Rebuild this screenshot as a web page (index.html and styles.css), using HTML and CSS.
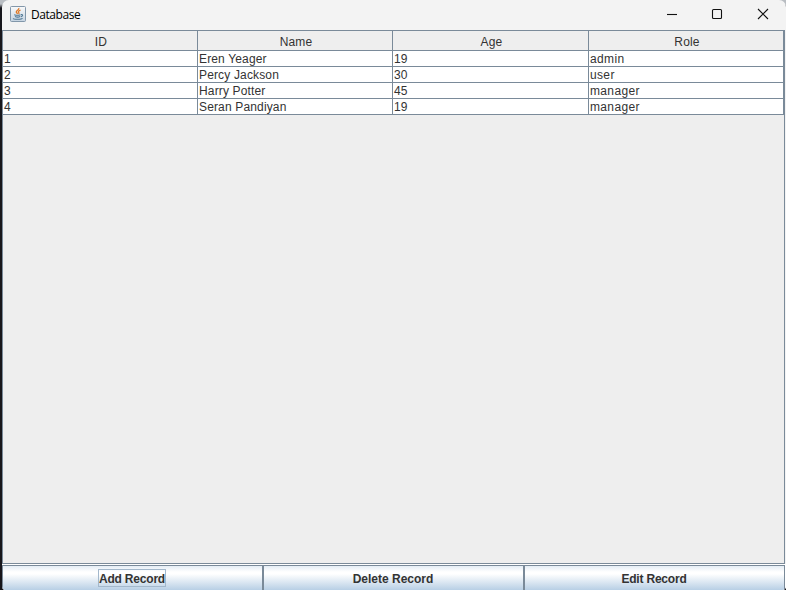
FILE: index.html
```html
<!DOCTYPE html>
<html lang="en">
<head>
<meta charset="utf-8">
<title>Database</title>
<link rel="stylesheet" href="styles.css">
</head>
<body>
<main class="window">
  <header class="titlebar">
    <svg class="app-icon" width="16" height="16" viewBox="0 0 16 16">
      <defs><linearGradient id="tile" x1="0" y1="0" x2="0" y2="1"><stop offset="0" stop-color="#fafafa"/><stop offset="1" stop-color="#c4d3e1"/></linearGradient></defs>
      <rect x=".5" y=".5" width="15" height="15" rx="1" fill="url(#tile)" stroke="#8297aa"/>
      <path d="M8.800 2C9.500 4 5.800 4.300 6.300 6C6.500 7 7.500 7.200 7.300 8M10.500 4C8.500 5 7.800 5.600 8.800 6.600C9.200 7.300 8.900 7.800 8.500 8.100" fill="none" stroke="#e07a28" stroke-width="1.300"/>
      <path d="M4.200 8.700C6 9.300 9 9.300 10.500 8.700M5 10.500C6.500 11.200 9 11.200 10.200 10.500M11 8.600C13.300 8.200 13 10.200 10.900 10.700M3.300 12.300C3.500 13.600 11.700 13.600 12.500 12.300" fill="none" stroke="#4f7794" stroke-width="1.100"/>
    </svg>
    <h1 class="title">Database</h1>
    <div class="controls">
      <svg width="12" height="12" viewBox="0 0 12 12"><path d="M2 6.500H12"/></svg>
      <svg width="12" height="12" viewBox="0 0 12 12"><rect x="1.500" y="1.500" width="9" height="9" rx="1"/></svg>
      <svg width="12" height="12" viewBox="0 0 12 12"><path d="M1 1L11 11M11 1L1 11"/></svg>
    </div>
  </header>
  <section class="pane">
    <div class="grid">
      <div class="head">ID</div><div class="head">Name</div><div class="head">Age</div><div class="head">Role</div>
      <div class="cell">1</div><div class="cell">Eren Yeager</div><div class="cell">19</div><div class="cell role">admin</div>
      <div class="cell">2</div><div class="cell">Percy Jackson</div><div class="cell">30</div><div class="cell role">user</div>
      <div class="cell">3</div><div class="cell">Harry Potter</div><div class="cell">45</div><div class="cell role">manager</div>
      <div class="cell">4</div><div class="cell">Seran Pandiyan</div><div class="cell">19</div><div class="cell role">manager</div>
    </div>
  </section>
  <footer class="actions">
    <button class="action"><span class="label tight focused">Add Record</span></button>
    <button class="action"><span class="label">Delete Record</span></button>
    <button class="action"><span class="label tight">Edit Record</span></button>
  </footer>
</main>
</body>
</html>
```
FILE: styles.css
```css
* { box-sizing: border-box; }
body {
  margin: 0;
  height: 590px;
  padding-left: 2px;
  overflow: hidden;
  background: linear-gradient(#b9bdc2 0, #b9bdc2 4px, #17161b 8px);
  font: 12px/15px "Liberation Sans", Arial, sans-serif;
  color: #333;
}
.window {
  display: flex;
  flex-direction: column;
  height: 590px;
  overflow: hidden;
  border-radius: 7px 7px 4px 4px;
  background: #f3f3f3;
}
.titlebar {
  display: flex;
  align-items: center;
  height: 30px;
  padding: 0 17px 2px 8px;
}
.app-icon { flex: none; }
.title {
  margin: 2px 0 0 5px;
  font: 12px/16px "Open Sans", sans-serif;
  letter-spacing: -0.45px;
  color: #000;
}
.controls {
  display: flex;
  gap: 34px;
  margin-left: auto;
}
.controls svg {
  fill: none;
  stroke: #111;
  stroke-width: 1.1;
}
.pane {
  height: 534px;
  margin-right: 1px;
  border: 1px solid #7a8a99;
  background: #eee;
}
.grid {
  display: grid;
  grid-template-columns: 195px 195px 196px 195px;
  grid-template-rows: 20px repeat(4, 16px);
}
.head, .cell {
  border-right: 1px solid #7a8a99;
  border-bottom: 1px solid #7a8a99;
  letter-spacing: 0.15px;
  white-space: nowrap;
}
.head {
  padding: 4px 0 0 2px;
  line-height: 14px;
  text-align: center;
}
.cell {
  padding: 1px 0 0 1px;
  background: #fff;
  line-height: 15px;
}
.role { letter-spacing: 0.35px; }
.actions {
  display: grid;
  grid-template-columns: 261px 261px 261px;
  flex: 1;
  padding: 1px 1px 0 0;
  background: #fff;
}
.action {
  display: flex;
  align-items: flex-start;
  justify-content: center;
  height: 25px;
  margin: 0;
  padding: 3px 1px 0 0;
  border: 1px solid #7a8a99;
  border-bottom: 0;
  background: linear-gradient(#e4edf5 0, #fff 6px, #fff 8px, #b8cfe5 24px);
  color: #333;
  font: bold 12px/18px "Liberation Sans", Arial, sans-serif;
}
.label {
  height: 18px;
  border: 1px solid transparent;
  line-height: 18px;
}
.tight { letter-spacing: -0.2px; }
.focused { border-color: #a3b8cc; }
```
